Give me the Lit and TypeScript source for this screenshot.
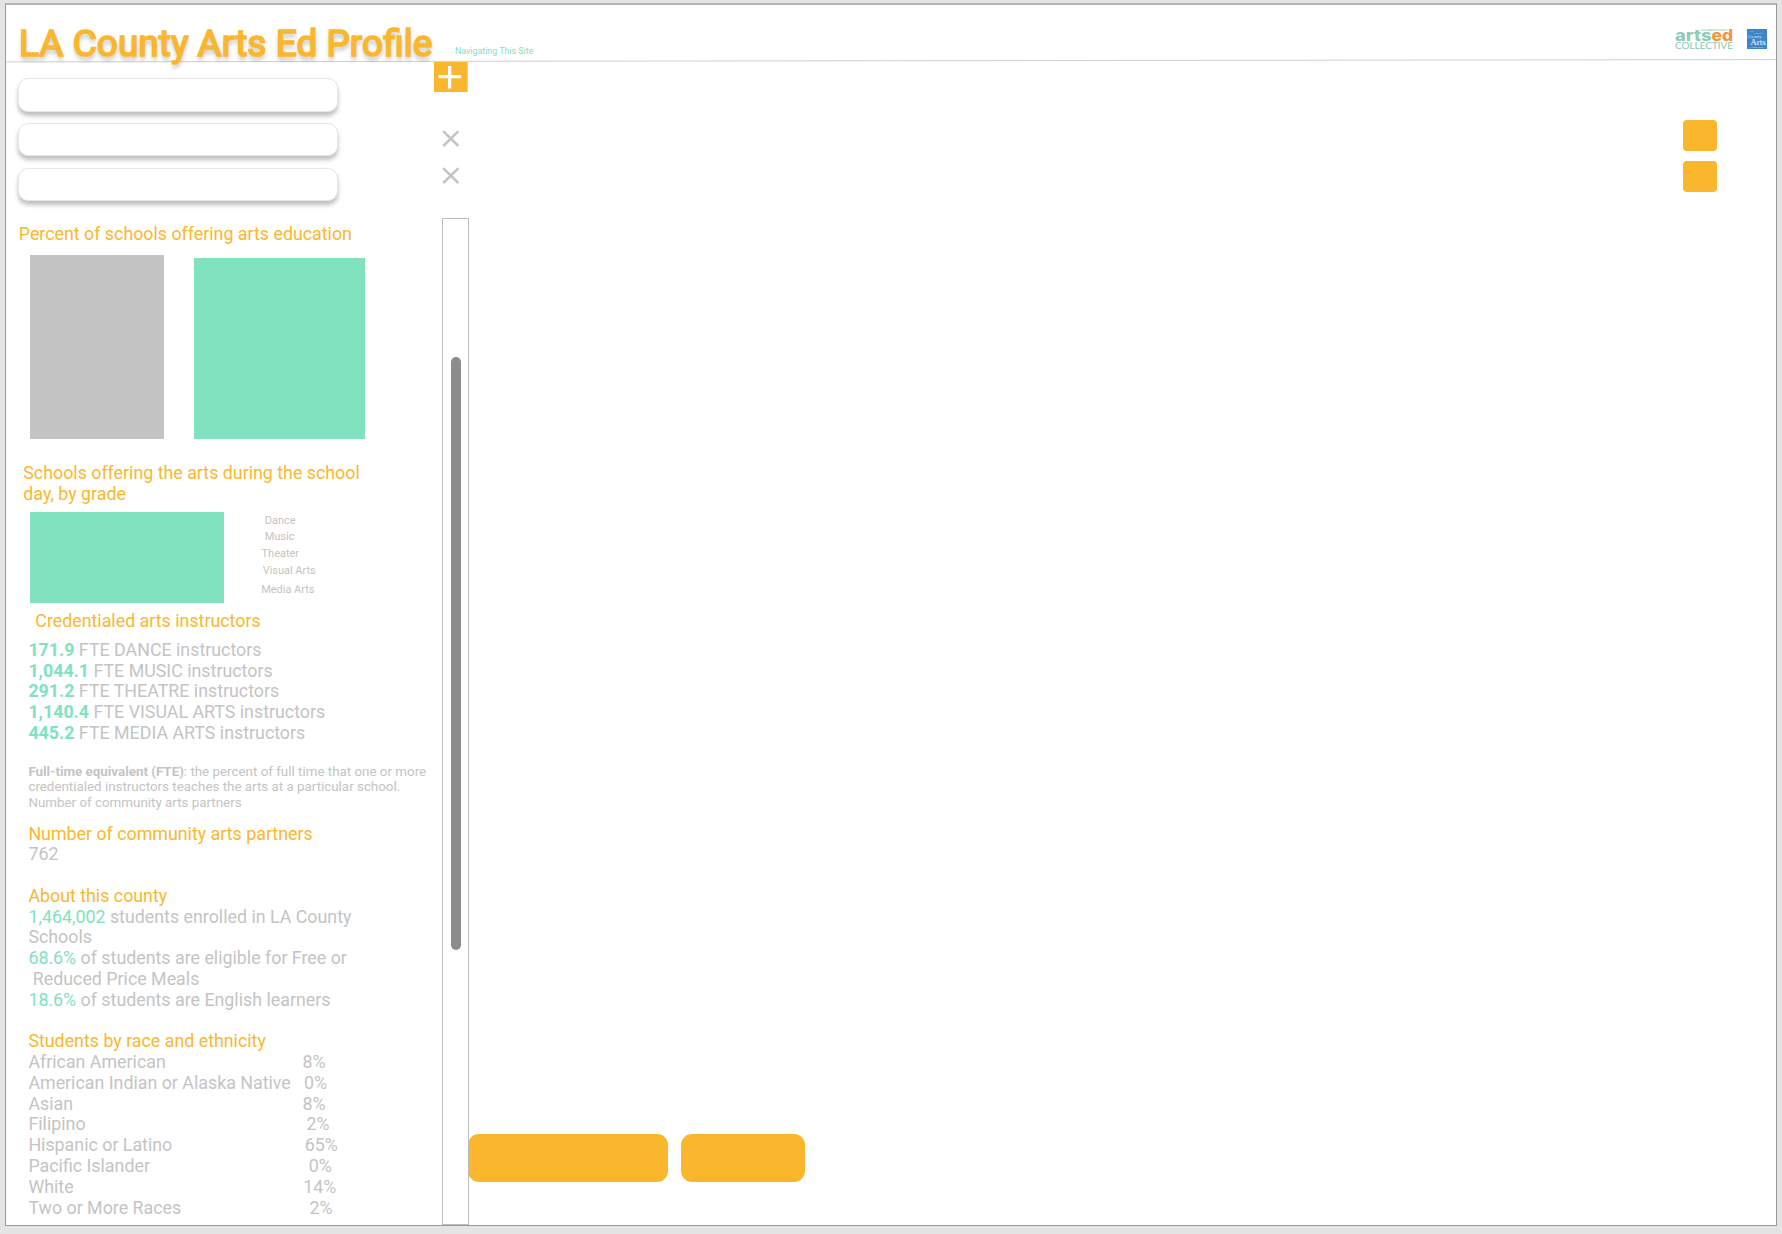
import { LitElement, html, svg, css } from "lit";
import { customElement } from "lit/decorators.js";

const SUBJECTS = [
  { name: "Dance", indent: 3.6, height: 16.4 },
  { name: "Music", indent: 3.6, height: 16.8 },
  { name: "Theater", indent: 0.4, height: 17 },
  { name: "Visual Arts", indent: 1.5, height: 19 },
  { name: "Media Arts", indent: 0, height: 16 },
];

const INSTRUCTORS = [
  ["171.9", "DANCE"],
  ["1,044.1", "MUSIC"],
  ["291.2", "THEATRE"],
  ["1,140.4", "VISUAL ARTS"],
  ["445.2", "MEDIA ARTS"],
];

const ETHNICITY = [
  { group: "African American", share: "8%", indent: 0 },
  { group: "American Indian or Alaska Native", share: "0%", indent: 1.3 },
  { group: "Asian", share: "8%", indent: 0 },
  { group: "Filipino", share: "2%", indent: 3.8 },
  { group: "Hispanic or Latino", share: "65%", indent: 2.2 },
  { group: "Pacific Islander", share: "0%", indent: 6.2 },
  { group: "White", share: "14%", indent: 0.6 },
  { group: "Two or More Races", share: "2%", indent: 6.8 },
];

const cross = svg`<path d="M1.2 1.2 L16.4 16 M16.4 1.2 L1.2 16" stroke="#c4c4c4" stroke-width="2.5" fill="none" />`;

@customElement("arts-header")
export class ArtsHeader extends LitElement {
  static styles = css`
    :host {
      display: block;
      height: 57px;
      position: relative;
      font-family: Roboto, "Liberation Sans", sans-serif;
    }
    .bar {
      display: flex;
      align-items: flex-start;
      height: 57px;
    }
    .title {
      margin: 0;
      padding: 17px 0 0 13px;
      width: 437px;
      box-sizing: border-box;
      font-size: 37.05px;
      line-height: 43px;
      font-weight: 400;
      white-space: nowrap;
      color: #fab72e;
      -webkit-text-stroke: 1.7px #fab72e;
      text-shadow: 0 4px 4px rgba(0, 0, 0, 0.27);
    }
    .nav {
      padding: 41px 0 0 12px;
      font-size: 8.87px;
      line-height: 11px;
      color: #81e2bf;
      white-space: nowrap;
    }
    .logos {
      margin-left: auto;
      display: flex;
      gap: 13px;
      padding: 24px 9px 0 0;
    }
    .logos svg {
      display: block;
      overflow: visible;
    }
    .rule {
      position: absolute;
      left: 0;
      top: 52px;
      width: 100%;
      height: 8px;
      z-index: -1;
    }
  `;
  render() {
    return html`
      <div class="bar">
        <h1 class="title">LA County Arts Ed Profile</h1>
        <span class="nav">Navigating This Site</span>
        <div class="logos">
          <svg width="59" height="21" viewBox="0 0 59 21">
            <text x="26" y="2.2" font-family="Inter" font-weight="600" font-size="2.6" textLength="27" fill="#8fcbb8">LOS ANGELES COUNTY</text>
            <text x="0" y="12" font-family="Inter" font-weight="800" font-size="15.4" textLength="36.5" lengthAdjust="spacingAndGlyphs" fill="#8fcbb8">arts</text>
            <text x="36.6" y="12" font-family="Inter" font-weight="800" font-size="15.4" textLength="21.6" lengthAdjust="spacingAndGlyphs" fill="#f5953b">ed</text>
            <text x="0" y="19.9" font-family="Lato" font-size="8.8" textLength="58" lengthAdjust="spacingAndGlyphs" fill="#84c9b3">COLLECTIVE</text>
          </svg>
          <svg width="20" height="20" viewBox="0 0 20 20">
            <rect width="20" height="20" fill="#3d85c9" />
            <g font-family="Liberation Serif" fill="#d5e5f5">
              <text x="3" y="2.6" font-size="2.2">Los</text>
              <text x="6.5" y="4.8" font-size="2.4" textLength="9">Angeles</text>
              <text x="1" y="9.4" font-size="5" textLength="13.6" lengthAdjust="spacingAndGlyphs">County</text>
              <text x="3.2" y="16" font-size="8" textLength="15.6" lengthAdjust="spacingAndGlyphs" fill="#fff">Arts</text>
              <text x="3" y="18.8" font-size="2.2" textLength="13">Commission</text>
            </g>
          </svg>
        </div>
      </div>
      <svg class="rule" viewBox="0 0 1771 8" preserveAspectRatio="none">
        <path d="M0 4.9 L1771 2.6" stroke="#cfcfcf" stroke-width="1" />
      </svg>
    `;
  }
}

@customElement("filter-strip")
export class FilterStrip extends LitElement {
  static styles = css`
    :host {
      display: flex;
      align-items: flex-start;
      height: 156px;
    }
    .fields {
      display: flex;
      flex-direction: column;
      gap: 11.4px;
      padding: 16px 0 0 12.4px;
      width: 428.4px;
      box-sizing: border-box;
    }
    .field {
      width: 320px;
      height: 33.5px;
      box-sizing: border-box;
      border: 1px solid #e6e6e6;
      border-radius: 10px;
      background: #fff;
      box-shadow: 0 4px 4px rgba(0, 0, 0, 0.25);
    }
    .actions {
      display: flex;
      flex-direction: column;
    }
    svg {
      display: block;
    }
    .close {
      margin-left: 7.3px;
    }
    .first {
      margin-top: 38.4px;
    }
    .second {
      margin-top: 18.4px;
    }
    .tools {
      margin-left: auto;
      padding: 57.5px 59px 0 0;
      display: flex;
      flex-direction: column;
      gap: 10px;
    }
    .tool {
      width: 33.7px;
      height: 31px;
      border-radius: 4px;
      background: #fab72e;
    }
  `;
  render() {
    return html`
      <div class="fields">
        <div class="field"></div>
        <div class="field"></div>
        <div class="field"></div>
      </div>
      <div class="actions">
        <svg width="34" height="30" viewBox="0 0 34 30">
          <rect width="33.7" height="30" fill="#fab72e" />
          <path d="M4.5 14.6 H27.2 M15.6 4 V26.4" stroke="#fff" stroke-width="3.3" />
        </svg>
        <svg class="close first" width="18" height="18" viewBox="0 0 18 18">${cross}</svg>
        <svg class="close second" width="18" height="18" viewBox="0 0 18 18">${cross}</svg>
      </div>
      <div class="tools">
        <div class="tool"></div>
        <div class="tool"></div>
      </div>
    `;
  }
}

@customElement("county-panel")
export class CountyPanel extends LitElement {
  static styles = css`
    :host {
      display: block;
      width: 436px;
      box-sizing: border-box;
      padding: 5.8px 0 0 22.4px;
      font-family: Roboto, "Liberation Sans", sans-serif;
      font-size: 17.82px;
      line-height: 20.78px;
      color: #c4c4c4;
      white-space: nowrap;
    }
    h2 {
      margin: 0;
      font: inherit;
      color: #fab72e;
    }
    p {
      margin: 0;
    }
    .percent {
      margin-left: -9.6px;
    }
    .charts {
      display: flex;
      align-items: flex-end;
      gap: 30px;
      padding: 10.1px 0 0 1.5px;
      height: 184px;
    }
    .gray {
      width: 134px;
      height: 184px;
      background: #c4c4c4;
    }
    .teal {
      width: 171.4px;
      height: 180.2px;
      background: #81e2bf;
    }
    .grade {
      margin: 24.2px 0 0 -5.1px;
    }
    .by-grade {
      display: flex;
      padding: 7.6px 0 0 1.5px;
      height: 91px;
    }
    .band {
      width: 194.4px;
      height: 91px;
      background: #81e2bf;
    }
    .subjects {
      padding: 2px 0 0 36.9px;
      font-size: 10.96px;
      line-height: 13px;
    }
    .credentialed {
      margin: 7.8px 0 0 6.9px;
    }
    .instructors {
      margin-top: 8.3px;
    }
    .instructors b {
      color: #81e2bf;
    }
    .note {
      margin-top: 19.8px;
      font-size: 13.36px;
      line-height: 15.63px;
    }
    .section {
      margin-top: 20.78px;
    }
    .note + .section {
      margin-top: 13.1px;
    }
    .num {
      color: #81e2bf;
    }
    .pre {
      white-space: pre;
    }
    .row {
      display: grid;
      grid-template-columns: 274.2px auto;
    }
  `;
  render() {
    return html`
      <h2 class="percent">Percent of schools offering arts education</h2>
      <div class="charts">
        <div class="gray"></div>
        <div class="teal"></div>
      </div>
      <h2 class="grade">Schools offering the arts during the school<br />day, by grade</h2>
      <div class="by-grade">
        <div class="band"></div>
        <div class="subjects">
          ${SUBJECTS.map(
            (s) => html`<div style="height:${s.height}px;padding-left:${s.indent}px">${s.name}</div>`
          )}
        </div>
      </div>
      <h2 class="credentialed">Credentialed arts instructors</h2>
      <div class="instructors">
        ${INSTRUCTORS.map(([n, s]) => html`<p><b>${n}</b> FTE ${s} instructors</p>`)}
      </div>
      <p class="note">
        <b>Full-time equivalent (FTE)</b>: the percent of full time that one or more<br />credentialed
        instructors teaches the arts at a particular school.<br />Number of community arts partners
      </p>
      <div class="section">
        <h2>Number of community arts partners</h2>
        <p>762</p>
      </div>
      <div class="section">
        <h2>About this county</h2>
        <p><span class="num">1,464,002</span> students enrolled in LA County<br />Schools</p>
        <p><span class="num">68.6%</span> of students are eligible for Free or</p>
        <p class="pre"> Reduced Price Meals</p>
        <p><span class="num">18.6%</span> of students are English learners</p>
      </div>
      <div class="section">
        <h2>Students by race and ethnicity</h2>
        ${ETHNICITY.map(
          (e) => html`<div class="row">
            <span>${e.group}</span><span style="padding-left:${e.indent}px">${e.share}</span>
          </div>`
        )}
      </div>
    `;
  }
}

@customElement("app-root")
export class AppRoot extends LitElement {
  static styles = css`
    :host {
      display: block;
      width: 1782px;
      height: 1234px;
      box-sizing: border-box;
      padding: 3px 5px 8px 5px;
      background: #e4e4e4;
      overflow: hidden;
    }
    .frame {
      display: flex;
      flex-direction: column;
      width: 1772px;
      height: 1223px;
      box-sizing: border-box;
      border: 1px solid #999;
      border-top: 2px solid #b5b5b5;
      background: #fff;
      position: relative;
      z-index: 0;
    }
    .body {
      display: flex;
      flex: 1;
      min-height: 0;
    }
    .track {
      width: 27px;
      box-sizing: border-box;
      border: 1px solid #bdbdbd;
      padding: 138.3px 0 0 8.3px;
      position: relative;
      z-index: 1;
    }
    .thumb {
      width: 9.8px;
      height: 592.7px;
      border-radius: 5px;
      background: #8c8c8c;
    }
    .canvas {
      flex: 1;
      display: flex;
      align-items: flex-end;
      gap: 12.7px;
      padding-bottom: 43px;
      margin-left: -0.7px;
    }
    .button {
      height: 47.6px;
      border-radius: 11px;
      background: #fab72e;
    }
    .wide {
      width: 200px;
    }
    .narrow {
      width: 124px;
    }
  `;
  render() {
    return html`
      <div class="frame">
        <arts-header></arts-header>
        <filter-strip></filter-strip>
        <div class="body">
          <county-panel></county-panel>
          <div class="track"><div class="thumb"></div></div>
          <div class="canvas">
            <div class="button wide"></div>
            <div class="button narrow"></div>
          </div>
        </div>
      </div>
    `;
  }
}
